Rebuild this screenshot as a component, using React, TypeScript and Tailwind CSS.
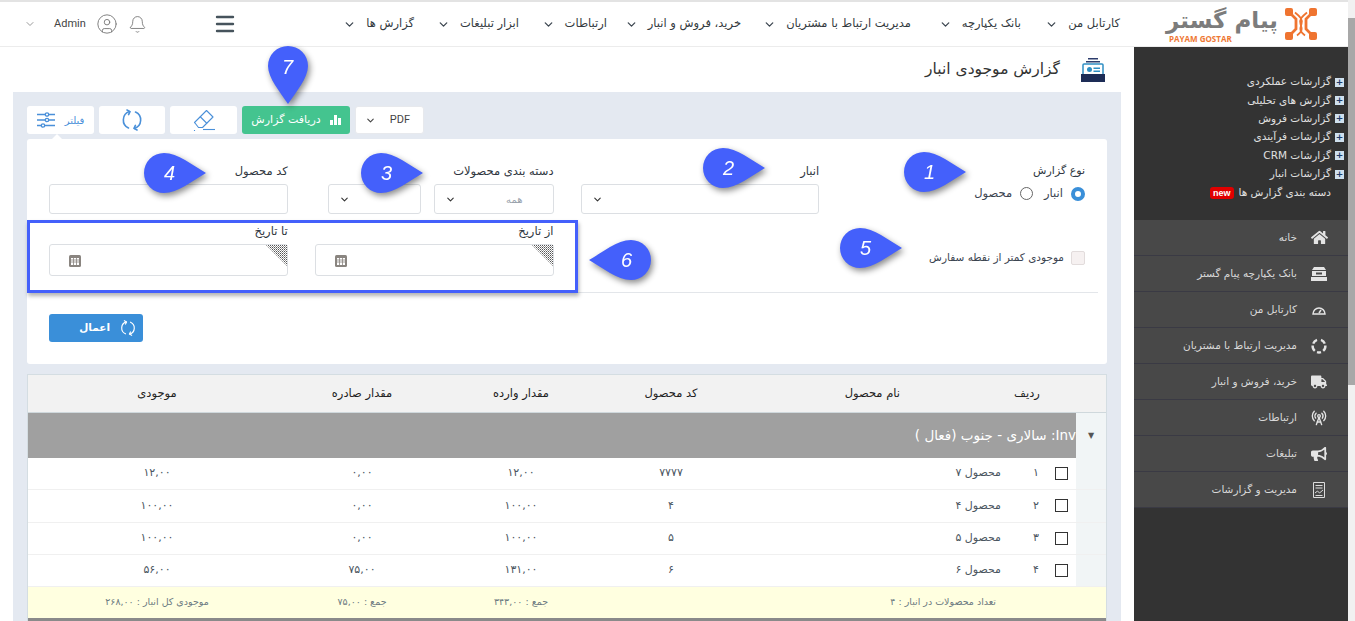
import { ChevronDown, Bell, CircleUser, Menu, RadioTower } from "lucide-react";
import { FaBullhorn, FaHome, FaTruck } from "react-icons/fa";
import type { ReactNode } from "react";

const NAV = [
  { label: "کارتابل من", width: "w-[99px]" },
  { label: "بانک یکپارچه", width: "w-[110px]" },
  { label: "مدیریت ارتباط با مشتریان", width: "w-[170px]" },
  { label: "خرید، فروش و انبار", width: "w-[134px]" },
  { label: "ارتباطات", width: "w-[88px]" },
  { label: "ابزار تبلیغات", width: "w-[105px]" },
  { label: "گزارش ها", width: "w-[70px]" },
];

const TREE = [
  "گزارشات عملکردی",
  "گزارش های تحلیلی",
  "گزارشات فروش",
  "گزارشات فرآیندی",
  "گزارشات CRM",
  "گزارشات انبار",
];

const ROWS = [
  { n: "۱", name: "محصول ۷", code: "۷۷۷۷", inQty: "۱۲,۰۰", outQty: "۰,۰۰", stock: "۱۲,۰۰" },
  { n: "۲", name: "محصول ۴", code: "۴", inQty: "۱۰۰,۰۰", outQty: "۰,۰۰", stock: "۱۰۰,۰۰" },
  { n: "۳", name: "محصول ۵", code: "۵", inQty: "۱۰۰,۰۰", outQty: "۰,۰۰", stock: "۱۰۰,۰۰" },
  { n: "۴", name: "محصول ۶", code: "۶", inQty: "۱۳۱,۰۰", outQty: "۷۵,۰۰", stock: "۵۶,۰۰" },
];

const COLS = "grid grid-cols-[30px_29px_22px_287px_134px_166px_152px_1fr]";

function SyncIcon({ size, color }: { size: number; color: string }) {
  return (
    <svg width={size} height={size} viewBox="0 0 22 22" fill="none" stroke={color} strokeWidth="1.6" strokeLinecap="round" strokeLinejoin="round">
      <path d="M8.5 2.6A8.8 8.8 0 0 0 7.5 19" />
      <path d="M13.5 19.4A8.8 8.8 0 0 0 14.5 3" />
      <path d="M6 1l3 1.6L7.6 5.6" />
      <path d="M16 21l-3-1.6 1.4-3" />
    </svg>
  );
}

function FilterIcon() {
  return (
    <svg width="18" height="16" viewBox="0 0 18 16" fill="#fff" stroke="#4a90d9" strokeWidth="1.3">
      <path d="M0 2.500h18M0 8h18M0 13.500h18" />
      <circle cx="10" cy="2.500" r="1.700" />
      <circle cx="10" cy="8" r="1.700" />
      <circle cx="6" cy="13.500" r="1.700" />
    </svg>
  );
}

function EraserIcon() {
  return (
    <svg width="23" height="23" viewBox="0 0 23 23" fill="none" stroke="#4a90d9" strokeWidth="1.100" strokeLinejoin="round">
      <path d="M14.500 1.500l6.500 6.500-10.500 10.500H6.500L3 14l-.5-.5z" />
      <path d="M8 7.500l7 7" />
      <path d="M11 20.500h12" />
      <path d="M2.500 21v1" />
    </svg>
  );
}

function LogoMark() {
  return (
    <svg width="32" height="32" viewBox="0 0 32 32" fill="#ef7430" stroke="none">
      <rect x="0" y="0" width="8" height="8" rx="2" />
      <rect x="24" y="0" width="8" height="8" rx="2" />
      <rect x="0" y="24" width="8" height="8" rx="2" />
      <rect x="24" y="24" width="8" height="8" rx="2" />
      <g fill="none" stroke="#ef7430" strokeWidth="2.800">
        <path d="M5 5l6 6v10l-6 6" />
        <path d="M27 5l-6 6v10l6 6" />
        <path d="M10 4.500c5 4 8 7 6.500 11.500S14 23 20 27.500" strokeWidth="1.800" />
        <path d="M22 4.500c-5 4-8 7-6.500 11.500s2.500 7-3.500 11.500" strokeWidth="1.800" />
      </g>
    </svg>
  );
}

function BankIcon() {
  return (
    <svg width="16" height="14" viewBox="0 0 16 14" fill="#e4e4e4">
      <path d="M3 0h10l2 3H1z" />
      <path d="M1 4h14v5H1zM5 5.500v2h6v-2z" fillRule="evenodd" />
      <path d="M0 10h16v4H0z" />
    </svg>
  );
}

function GaugeIcon() {
  return (
    <svg width="14" height="10" viewBox="0 0 14 10" fill="none" stroke="#e4e4e4" strokeWidth="1.500">
      <path d="M1 9a6 6 0 0 1 12 0z" />
      <path d="M7 8l2-3" />
    </svg>
  );
}

function CrmIcon() {
  return (
    <svg width="16" height="16" viewBox="0 0 16 16" fill="none" stroke="#e4e4e4" strokeWidth="2.400">
      <path d="M2.200 5.600A6.400 6.400 0 0 1 6 1.900" />
      <path d="M10 1.900a6.400 6.400 0 0 1 3.800 3.700" />
      <path d="M14.400 7.500a6.400 6.400 0 0 1-2.200 5.300" />
      <path d="M10 14.100a6.400 6.400 0 0 1-4 0" />
      <path d="M3.800 12.800a6.400 6.400 0 0 1-2.200-5.300" />
    </svg>
  );
}

function ReportIcon() {
  return (
    <svg width="14" height="16" viewBox="0 0 14 16" fill="none" stroke="#dcdcdc" strokeWidth="1">
      <path d="M1.500.5h11v15h-11z" />
      <path d="M3.500 3.500h7M3.500 6h7" />
      <path d="M3 11l2.500-2 2 2 3.500-3" />
      <path d="M3.500 13.500h7" />
    </svg>
  );
}

const SIDE_ITEMS: { label: string; icon: ReactNode }[] = [
  { label: "خانه", icon: <FaHome size={17} color="#e4e4e4" /> },
  { label: "بانک یکپارچه پیام گستر", icon: <BankIcon /> },
  { label: "کارتابل من", icon: <GaugeIcon /> },
  { label: "مدیریت ارتباط با مشتریان", icon: <CrmIcon /> },
  { label: "خرید، فروش و انبار", icon: <FaTruck size={16} color="#e4e4e4" /> },
  { label: "ارتباطات", icon: <RadioTower size={16} stroke="#e4e4e4" /> },
  { label: "تبلیغات", icon: <FaBullhorn size={16} color="#e4e4e4" /> },
  { label: "مدیریت و گزارشات", icon: <ReportIcon /> },
];

function Logo() {
  return (
    <div className="flex items-center gap-[5px]" dir="ltr">
      <div className="flex w-[116px] flex-col items-start">
        <span className="w-full whitespace-nowrap text-center text-[23px] font-bold leading-[28px] text-[#7c7c7c]" dir="rtl">
          پیام گستر
        </span>
        <span className="pl-[5px] text-[8px] font-bold leading-[9px] text-[#ee7733] font-['Open_Sans',sans-serif]">PAYAM GOSTAR</span>
      </div>
      <LogoMark />
    </div>
  );
}

function Header() {
  return (
    <header className="flex h-[47px] shrink-0 items-center border-t-2 border-b border-t-[#e3e3e3] border-b-[#ececec] bg-white" dir="rtl">
      <div className="flex w-[228px] shrink-0 pr-[31px]">
        <Logo />
      </div>
      <nav className="flex items-center text-[11.5px] text-[#333a40]">
        {NAV.map((item) => (
          <div key={item.label} className={`flex shrink-0 items-center gap-[10px] whitespace-nowrap ${item.width}`}>
            <span>{item.label}</span>
            <ChevronDown size={13} strokeWidth={2.4} className="shrink-0 text-[#3c4650]" />
          </div>
        ))}
      </nav>
      <Menu size={24} strokeWidth={2.4} className="mr-[107px] text-[#46535c]" />
      <div className="mr-auto flex items-center gap-[10px] pl-[24px]" dir="ltr">
        <ChevronDown size={12} className="text-[#9a9a9a]" />
        <span className="ml-[8px] text-[11px] text-[#444] font-['Roboto',sans-serif]">Admin</span>
        <CircleUser size={22} strokeWidth={1} className="text-[#777]" />
        <Bell size={19} strokeWidth={1} className="text-[#666]" />
      </div>
    </header>
  );
}

function Select({ className, value }: { className: string; value?: string }) {
  return (
    <div className={`flex h-[30px] items-center justify-between rounded-[3px] border border-[#dcdfe3] bg-white pl-[10px] pr-[30px] ${className}`}>
      <span className="text-[10px] text-[#9aa3ad]">{value}</span>
      <ChevronDown size={11} strokeWidth={2.4} className="text-[#333]" />
    </div>
  );
}

function Field({ label, children }: { label: string; children: ReactNode }) {
  return (
    <div>
      <div className="mb-[6px] text-[11.5px] leading-[14px] text-[#2f3640]">{label}</div>
      {children}
    </div>
  );
}

function DateInput() {
  return (
    <div className="relative flex h-[32px] items-center rounded-[3px] border border-[#dcdfe3] bg-white pl-[19px]" dir="ltr">
      <svg width="12" height="13" viewBox="0 0 12 13" fill="#fff">
        <rect x="0" y="1" width="12" height="12" rx="1.500" fill="#8a8580" />
        <path d="M2 4h8v7H2z" />
        <path d="M2 6h8M2 8h8M4.500 4v7M7.500 4v7" stroke="#8a8580" strokeWidth=".8" />
      </svg>
      <svg width="21" height="21" viewBox="0 0 21 21" className="absolute right-0 top-0">
        <defs>
          <pattern id="hatch" width="2" height="2" patternUnits="userSpaceOnUse">
            <rect width="1" height="1" fill="#555" />
            <rect x="1" y="1" width="1" height="1" fill="#999" />
          </pattern>
        </defs>
        <path d="M0 0h21v21z" fill="url(#hatch)" />
      </svg>
    </div>
  );
}

function FilterForm() {
  return (
    <section className="relative h-[225px] rounded-[3px] bg-white px-[22px] pt-[25px]" dir="rtl">
      <div className="grid grid-cols-4 gap-x-[27px]">
        <div>
          <div className="text-[11px] leading-[14px] text-[#2f3640]">نوع گزارش</div>
          <div className="mt-[7px] flex items-center gap-[8px] text-[11.5px] text-[#3b4450]">
            <span className="h-[14px] w-[14px] rounded-full border-[4px] border-[#3a8fd9] bg-white" />
            <span>انبار</span>
            <span className="mr-[3px] h-[13px] w-[13px] rounded-full border border-[#666] bg-white" />
            <span>محصول</span>
          </div>
        </div>
        <Field label="انبار">
          <Select className="w-full" />
        </Field>
        <Field label="دسته بندی محصولات">
          <div className="flex gap-[13px]">
            <Select className="w-[120px]" value="همه" />
            <Select className="w-[93px]" />
          </div>
        </Field>
        <Field label="کد محصول">
          <div className="h-[30px] rounded-[3px] border border-[#dcdfe3] bg-white" />
        </Field>
      </div>
      <div className="mt-[10px] mr-[-13px] ml-[-22px] grid grid-cols-4 gap-x-[27px] border-b border-[#e3e6ea] pb-[16px] pl-[22px] pr-[13px]">
        <div className="flex items-center gap-[7px] pt-[15px] text-[10.5px] text-[#3b4450]">
          <span className="h-[14px] w-[14px] rounded-[2px] border border-[#e2dcdc] bg-[#f6f1f1]" />
          <span>موجودی کمتر از نقطه سفارش</span>
        </div>
        <div />
        <Field label="از تاریخ">
          <DateInput />
        </Field>
        <Field label="تا تاریخ">
          <DateInput />
        </Field>
      </div>
      <div className="mt-[21px] flex justify-end">
        <button className="flex h-[28px] w-[94px] items-center justify-start gap-[10px] rounded-[3px] bg-[#3a8fd9] pr-[7px] text-[10.5px] font-bold text-white">
          <SyncIcon size={16} color="#fff" />
          <span>اعمال</span>
        </button>
      </div>
    </section>
  );
}

function Toolbar() {
  return (
    <div className="flex h-[30px] items-stretch gap-[5px]">
      <button className="relative flex w-[67px] items-center justify-center gap-[10px] rounded-[3px] bg-white text-[10px] text-[#4a90d9]">
        <FilterIcon />
        <span>فیلتر</span>
        <span className="absolute bottom-[-6px] left-[24px] h-0 w-0 border-x-[6px] border-b-[6px] border-x-transparent border-b-white" />
      </button>
      <button className="flex w-[66px] items-center justify-center rounded-[3px] bg-white">
        <SyncIcon size={22} color="#4a90d9" />
      </button>
      <button className="flex w-[67px] items-center justify-center rounded-[3px] bg-white">
        <EraserIcon />
      </button>
      <button className="flex w-[108px] items-center justify-center gap-[9px] rounded-[3px] bg-[#44c48f] text-[11px] text-white" dir="rtl">
        <svg width="11" height="10" viewBox="0 0 11 10" fill="#fff">
          <path d="M0 5h3v5H0zM4 0h3v10H4zM8 3h3v7H8z" />
        </svg>
        <span>دریافت گزارش</span>
      </button>
      <div className="flex w-[69px] items-center justify-between rounded-[3px] border border-[#e7e9ed] bg-white pl-[9px] pr-[13px] text-[11px] text-[#444] font-['Roboto',sans-serif]">
        <ChevronDown size={11} strokeWidth={2.4} />
        <span>PDF</span>
      </div>
    </div>
  );
}

function ReportTable() {
  return (
    <section className="flex-1 border border-b-0 border-[#d4dde2] bg-white text-[11px] text-[#333a40]" dir="rtl">
      <div className="grid h-[38px] grid-cols-[158px_210px_134px_166px_152px_1fr] items-center border-b border-[#cfd8dc] bg-[#f2f2f2] text-center text-[11.5px] text-[#222]">
        <span>ردیف</span>
        <span className="pr-[48px] text-right">نام محصول</span>
        <span>کد محصول</span>
        <span>مقدار وارده</span>
        <span>مقدار صادره</span>
        <span>موجودی</span>
      </div>
      <div className="grid h-[45px] grid-cols-[30px_1fr]">
        <div className="flex items-center justify-center bg-[#f1f5f6] text-[8px] text-[#555]">▼</div>
        <div className="flex items-center bg-[#a0a0a0] text-[13.5px] text-white">Inv: سالاری - جنوب (فعال )</div>
      </div>
      {ROWS.map((row) => (
        <div key={row.n} className={`${COLS} h-[32.25px] items-center border-b border-[#f0f0f0] text-center text-[#4a5560]`}>
          <div className="h-full bg-[#f1f5f6]" />
          <div className="flex justify-center">
            <span className="h-[13px] w-[13px] border border-[#333] bg-white" />
          </div>
          <span className="text-[11px]">{row.n}</span>
          <span className="pr-[24px] text-right">{row.name}</span>
          <span>{row.code}</span>
          <span>{row.inQty}</span>
          <span>{row.outQty}</span>
          <span>{row.stock}</span>
        </div>
      ))}
      <div className="grid h-[31px] grid-cols-[368px_134px_166px_152px_1fr] items-center bg-[#ffffe0] text-center text-[9.5px] text-[#6c7a80]">
        <span className="pr-[110px] text-right">تعداد محصولات در انبار : ۴</span>
        <span />
        <span>جمع : ۳۴۳,۰۰</span>
        <span>جمع : ۷۵,۰۰</span>
        <span>موجودی کل انبار : ۲۶۸,۰۰</span>
      </div>
      <div className="h-[3px] bg-[#8a8a8a]" />
    </section>
  );
}

function Sidebar() {
  return (
    <aside className="flex w-[214px] shrink-0 flex-col bg-[#333333] text-[#e0e0e0]" dir="rtl">
      <ul className="h-[173px] pr-[3px] pt-[26px] text-[10.5px]">
        {TREE.map((item) => (
          <li key={item} className="flex h-[18.4px] items-center gap-[4px] pr-[1px] whitespace-nowrap">
            <span className="flex h-[9px] w-[9px] items-center justify-center bg-[#cfe0ee] text-[9px] font-bold leading-none text-[#1d3b6a]">+</span>
            <span>{item}</span>
          </li>
        ))}
        <li className="flex h-[18.4px] items-center gap-[5px] pr-[14px]">
          <span>دسته بندی گزارش ها</span>
          <span className="rounded-[3px] bg-[#e00000] px-[3px] text-[9px] font-bold leading-[12px] text-white font-['Liberation_Sans',sans-serif]">new</span>
        </li>
      </ul>
      {SIDE_ITEMS.map((item) => (
        <div key={item.label} className="flex h-[36px] items-center gap-[12px] border-b border-[#3a3a44] bg-[#484848] pr-[19px] text-[10.5px] text-[#d8d8d8]">
          <span className="flex w-[20px] shrink-0 justify-center">{item.icon}</span>
          <span>{item.label}</span>
        </div>
      ))}
    </aside>
  );
}

function Pin({ n, tip, className }: { n: number; tip: "right" | "left" | "down"; className: string }) {
  const isDown = tip === "down";
  return (
    <div className={`absolute flex items-center justify-center drop-shadow-[2px_3px_3px_rgba(0,0,0,0.45)] ${className}`}>
      <svg width={isDown ? 40 : 62} height={isDown ? 58 : 40} viewBox={isDown ? "0 0 40 58" : "0 0 62 40"} fill="#4460fb">
        {tip === "right" && <path d="M20 0C34 0 48 12 62 20 48 28 34 40 20 40A20 20 0 0 1 20 0Z" />}
        {tip === "left" && <path d="M42 0C28 0 14 12 0 20 14 28 28 40 42 40A20 20 0 0 0 42 0Z" />}
        {isDown && <path d="M0 20A20 20 0 0 1 40 20C40 32 28 46 20 58 12 46 0 32 0 20Z" />}
      </svg>
      <span
        className={`absolute text-[20px] italic leading-none text-white font-['Liberation_Sans',sans-serif] ${
          tip === "right" ? "left-[20px] top-[10px]" : tip === "left" ? "right-[19px] top-[10px]" : "left-[14px] top-[11px]"
        }`}
      >
        {n}
      </span>
    </div>
  );
}

export default function App() {
  return (
    <div className="relative flex h-[621px] w-[1355px] overflow-hidden bg-white font-['DejaVu_Sans',sans-serif]">
      <div className="flex min-w-0 flex-1 flex-col">
        <Header />
        <div className="flex min-h-0 flex-1">
          <main className="flex min-w-0 flex-1 flex-col">
            <div className="flex h-[45px] shrink-0 items-center justify-start gap-[20px] pr-[28px]" dir="rtl">
              <svg width="26" height="26" viewBox="0 0 26 26">
                <path d="M8 1h10v1.500H8zM6 4h14v1.500H6z" fill="#2c3c6c" />
                <path d="M3 8a1 1 0 0 1 1-1h18a1 1 0 0 1 1 1v10H3z" fill="#fff" stroke="#2f8fc4" strokeWidth="1.500" />
                <circle cx="9.500" cy="12.500" r="2.500" fill="#2f8fc4" />
                <path d="M13.500 10.500h6.500v1.500h-6.500zM13.500 13.500h6.500v1.500h-6.500z" fill="#2f8fc4" />
                <path d="M1 17h24v8H1z" fill="#1d2c56" />
              </svg>
              <h1 className="text-[15.5px] font-normal text-[#333]">گزارش موجودی انبار</h1>
            </div>
            <div className="mx-[13px] flex min-h-0 flex-1 flex-col gap-[10px] bg-[#e4e9f1] px-[14px] pt-[14px]">
              <Toolbar />
              <div className="-mt-[5px]">
                <FilterForm />
              </div>
              <ReportTable />
            </div>
          </main>
          <Sidebar />
        </div>
      </div>
      <div className="flex w-[7px] shrink-0 flex-col bg-[#f1f1f1]">
        <div className="h-[18px]" />
        <div className="h-[367px] bg-[#a8a8a8]" />
      </div>

      <div className="pointer-events-none absolute left-[27px] top-[220px] h-[73px] w-[551px] border-[3px] border-[#4460fb] shadow-[1px_3px_4px_rgba(0,0,0,0.3)]" />
      <Pin n={1} tip="right" className="left-[904px] top-[152px]" />
      <Pin n={2} tip="right" className="left-[703px] top-[148px]" />
      <Pin n={3} tip="right" className="left-[361px] top-[153px]" />
      <Pin n={4} tip="right" className="left-[144px] top-[153px]" />
      <Pin n={5} tip="right" className="left-[840px] top-[228px]" />
      <Pin n={6} tip="left" className="left-[589px] top-[240px]" />
      <Pin n={7} tip="down" className="left-[268px] top-[46px]" />
    </div>
  );
}
